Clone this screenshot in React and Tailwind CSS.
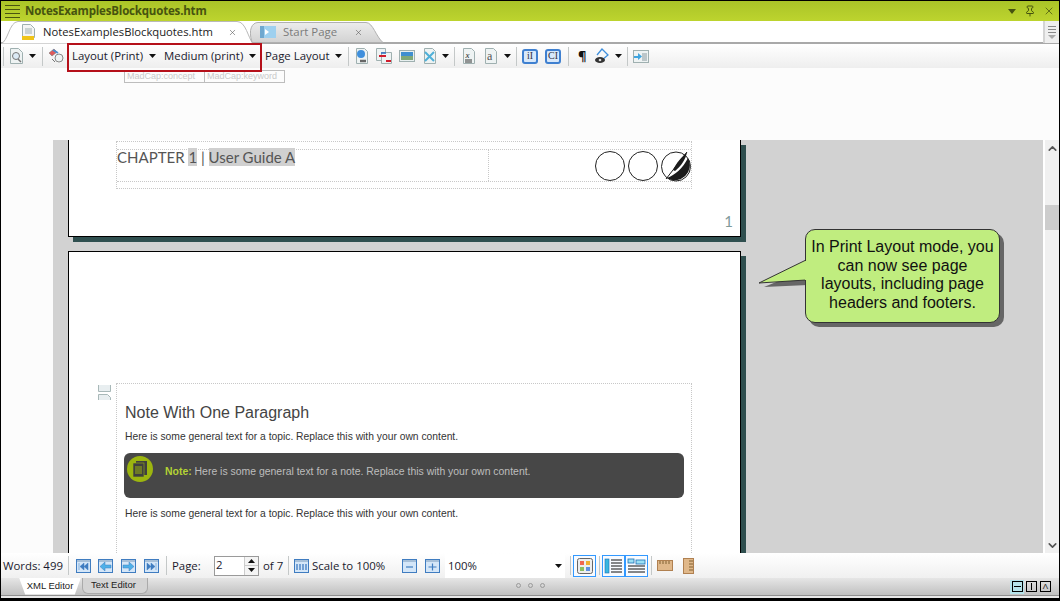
import { Pin, X, ChevronUp, ChevronDown } from "lucide-react";

const uiFont = { fontFamily: '"Open Sans", "Noto Sans", sans-serif' };

function Caret({ className = "" }) {
  return (
    <svg width="7" height="4" viewBox="0 0 7 4" className={className}>
      <path d="M0 0h7L3.5 4z" fill="#111" />
    </svg>
  );
}

function Sep({ className = "" }) {
  return <div className={`w-px h-[19px] bg-[#c4c8c8] ${className}`} />;
}

function Ico({ w = 16, h = 16, className = "", children }) {
  return (
    <svg width={w} height={h} viewBox={`0 0 ${w} ${h}`} className={`shrink-0 ${className}`}>
      {children}
    </svg>
  );
}

function DocShape() {
  return <path d="M1.5.5h8l3 3v12h-11z" fill="#eef3f3" stroke="#9fb0b0" />;
}

function NavIcon({ children }) {
  return (
    <Ico w={15} h={14}>
      <rect x=".5" y=".5" width="14" height="13" fill="#d4e6f8" stroke="#3f7cc0" />
      <rect x="1" y="1" width="13" height="2" fill="#a6bfd8" />
      {children}
    </Ico>
  );
}

function ToggleBox({ children }) {
  return (
    <div className="w-[23px] h-[22px] border border-[#3399ff] flex items-center justify-center bg-[#f8fbff]">
      {children}
    </div>
  );
}

function LinesIcon({ side }) {
  return (
    <Ico w={19} h={16}>
      {side ? (
        <>
          <rect x="1" y="1" width="4" height="14" fill="#39b7e0" stroke="#1c6fb5" strokeWidth=".6" />
          <path d="M7 2h11M7 5h11M7 8h11M7 11h11M7 14h11" stroke="#111" />
        </>
      ) : (
        <>
          <rect x="1" y="1" width="6" height="4" fill="#9be0f4" stroke="#1c6fb5" strokeWidth=".8" />
          <rect x="9" y="2" width="9" height="4" fill="#9be0f4" stroke="#1c6fb5" strokeWidth=".8" />
          <path d="M1 8h17M1 11h17M1 14h17" stroke="#111" />
        </>
      )}
    </Ico>
  );
}

function LetterIcon({ text }) {
  return (
    <div className="w-[16px] h-[15px] rounded-[3px] border-2 border-[#3f80d0] bg-[#d8e8fa] flex items-center justify-center text-[10px] leading-none text-[#334] font-['Liberation_Serif',serif]">
      {text}
    </div>
  );
}

export default function App() {
  return (
    <div className="relative w-[1060px] h-[601px] border border-black flex flex-col overflow-hidden bg-white" style={uiFont}>
      {/* Title bar */}
      <div className="h-[20px] shrink-0 flex items-center bg-gradient-to-b from-[#aac428] to-[#bdd42e]">
        <div className="ml-[4px] w-[15px] flex flex-col gap-[3px]">
          <div className="h-px bg-[#4a5510]" />
          <div className="h-px bg-[#4a5510]" />
          <div className="h-px bg-[#4a5510]" />
          <div className="h-px bg-[#4a5510]" />
        </div>
        <div className="ml-[5px] text-[11.5px] font-bold text-[#46530f] leading-none tracking-[-0.18px]">NotesExamplesBlockquotes.htm</div>
        <div className="ml-auto flex items-center text-[#46530f]">
          <Ico w={8} h={5}><path d="M0 0h8L4 5z" fill="#46530f" /></Ico>
          <Pin size={12} strokeWidth={2} className="ml-[8px]" />
          <X size={12} strokeWidth={1.5} className="ml-[7px] mr-[4px]" />
        </div>
      </div>

      {/* Document tabs */}
      <div className="relative h-[23px] shrink-0 flex border-b-[2px] border-[#a9a9a9] bg-white">
        <div className="relative w-[249px] h-[22px] flex items-center">
          <svg width="252" height="23" viewBox="0 0 252 23" className="absolute left-0 top-0">
            <path d="M0 22.5C7 21 8 1 17 .5H236C245 .5 247 17 252 22.5" fill="#fff" stroke="#b9b9b9" />
          </svg>
          <Ico w={13} h={16} className="relative ml-[21px]">
            <path d="M.5.5h8l4 4v9H.5z" fill="#f4f4f4" stroke="#9fb0b0" />
            <path d="M3 5h7M3 7h7M3 9h7" stroke="#9fb0b0" />
            <rect x="0" y="12" width="12" height="4" fill="#f0c419" />
          </Ico>
          <span className="relative ml-[8px] text-[11.25px] text-[#222] leading-none">NotesExamplesBlockquotes.htm</span>
          <X size={9} strokeWidth={1.5} className="relative ml-[15px] text-[#555]" />
        </div>
        <div className="relative w-[134px] h-[20px] mt-[1px] flex items-center">
          <svg width="134" height="21" viewBox="0 0 134 21" className="absolute left-0 top-0">
            <defs>
              <linearGradient id="startTab" x1="0" y1="0" x2="0" y2="1">
                <stop offset="0" stopColor="#ececec" />
                <stop offset="1" stopColor="#d2d2d2" />
              </linearGradient>
            </defs>
            <path d="M2 20C-2 8 2 .5 8 .5H116C123 .5 126 15 133 20.5H2z" fill="url(#startTab)" stroke="#b0b0b0" />
          </svg>
          <Ico w={16} h={12} className="relative ml-[10px]">
            <rect x="0" y="0" width="16" height="12" fill="#9ed0ef" />
            <rect x="0" y="0" width="4" height="12" fill="#6fa8cf" />
            <path d="M5 3l4 3-4 3z" fill="#fff" />
          </Ico>
          <span className="relative ml-[7px] text-[11.4px] text-[#7b7b7b] leading-none">Start Page</span>
          <X size={9} strokeWidth={1.5} className="relative ml-[17px] text-[#555]" />
        </div>
        <div className="absolute right-0 top-0 w-[16px] h-[22px] bg-[#efefef] border-l-[2px] border-[#d4d4d4] flex flex-col items-center justify-center gap-[2px]">
          <div className="w-[8px] h-px bg-[#888]" />
          <div className="w-[8px] h-px bg-[#888]" />
          <div className="w-[8px] h-px bg-[#888]" />
          <Ico w={8} h={4}><path d="M0 0h8L4 4z" fill="#aaa" /></Ico>
        </div>
      </div>

      {/* Toolbar */}
      <div className="h-[24px] shrink-0 flex items-center bg-gradient-to-b from-[#ffffff] to-[#eeeeee] text-[11.4px] text-[#1a1a2e]">
        <Sep className="ml-[2px]" />
        <Ico w={13} h={16} className="ml-[6px]">
          <path d="M.5.5h8l4 4v11H.5z" fill="#eef3f3" stroke="#9fb0b0" />
          <circle cx="6" cy="8" r="3.5" fill="#dbeaf5" stroke="#777" />
          <path d="M8 11l3 3" stroke="#777" strokeWidth="1.5" />
        </Ico>
        <Caret className="ml-[6px]" />
        <Sep className="ml-[6px]" />
        <Ico w={17} h={16} className="ml-[5px]">
          <path d="M1 5l5-4 3 3-5 4z" fill="#e05a5a" stroke="#777" strokeWidth=".6" />
          <path d="M5 2l5 3" stroke="#4a90d0" strokeWidth="2" />
          <circle cx="11" cy="10" r="4" fill="#eef3f3" stroke="#888" />
          <path d="M4 11l3 3" stroke="#777" />
        </Ico>
        <span className="ml-[7px] w-[77px] whitespace-nowrap">Layout (Print)</span>
        <Caret />
        <span className="ml-[8px] w-[85px] whitespace-nowrap">Medium (print)</span>
        <Caret />
        <span className="ml-[9px] w-[70px] whitespace-nowrap">Page Layout</span>
        <Caret />
        <Sep className="ml-[6px]" />
        <Ico w={14} h={16} className="ml-[6px]">
          <DocShape />
          <circle cx="6" cy="6" r="4" fill="#3f8fdc" />
          <path d="M5 13h6" stroke="#666" strokeWidth="2.5" />
        </Ico>
        <Ico w={16} h={16} className="ml-[7px]">
          <path d="M.5.5h9v12H.5z" fill="#eef3f3" stroke="#9fb0b0" />
          <path d="M5.5 4.500h10v11h-10z" fill="#eef3f3" stroke="#9fb0b0" />
          <path d="M3 8h7M10 13h5" stroke="#d01c2c" strokeWidth="2" />
          <path d="M5 5h5" stroke="#2a6fc0" strokeWidth="1.5" />
        </Ico>
        <Ico w={16} h={12} className="ml-[7px]">
          <rect x=".5" y=".5" width="15" height="11" fill="#e8f0f0" stroke="#9fb0b0" />
          <rect x="2" y="2" width="12" height="4" fill="#3f8fd0" />
          <rect x="2" y="6" width="12" height="4" fill="#7fa878" />
        </Ico>
        <Ico w={14} h={16} className="ml-[8px]">
          <DocShape />
          <path d="M2 4l9 9M11 4l-9 9" stroke="#4fb0d8" strokeWidth="2" />
        </Ico>
        <Caret className="ml-[5px]" />
        <Sep className="ml-[5px]" />
        <Ico w={13} h={16} className="ml-[7px]">
          <DocShape />
          <text x="3.500" y="10" fontSize="9" fontFamily="Liberation Serif" fontStyle="italic" fill="#222">x</text>
          <path d="M3 12h7M3 14h7" stroke="#333" />
        </Ico>
        <Ico w={13} h={16} className="ml-[9px]">
          <DocShape />
          <text x="3" y="12" fontSize="12" fontFamily="Liberation Serif" fill="#555">a</text>
        </Ico>
        <Caret className="ml-[7px]" />
        <Sep className="ml-[5px]" />
        <div className="ml-[5px]"><LetterIcon text="iI" /></div>
        <div className="ml-[7px]"><LetterIcon text="CI" /></div>
        <Sep className="ml-[7px]" />
        <span className="ml-[9px] w-[12px] text-[13px] font-bold text-[#111] leading-none">¶</span>
        <Ico w={16} h={17} className="ml-[4px]">
          <path d="M3 7l5-6 6 6-6 5" fill="none" stroke="#3f8fdc" strokeWidth="1.3" />
          <ellipse cx="6" cy="12" rx="5" ry="3" fill="#333" />
          <circle cx="6" cy="12" r="1.300" fill="#ddd" />
        </Ico>
        <Caret className="ml-[5px]" />
        <Sep className="ml-[5px]" />
        <Ico w={16} h={13} className="ml-[5px]">
          <rect x=".5" y=".5" width="15" height="12" fill="#eef3f3" stroke="#9fb0b0" />
          <path d="M9 4h5M9 6h5M9 8h5M9 10h5" stroke="#8a9aa0" />
          <path d="M1 6h4V3l4 3.500L5 10V8H1z" fill="#3fa5e0" />
        </Ico>
      </div>

      {/* Tag strip above the document */}
      <div className="h-[72px] shrink-0 bg-[#fcfcfc] pl-[123px] pt-[2px]">
        <div className="flex w-[161px] h-[13px] border border-[#bdbdbd] text-[9px] leading-[11px] text-[#c9c9c9] font-['Liberation_Sans',sans-serif]">
          <div className="w-[80px] pl-[2px] border-r border-[#bdbdbd]">MadCap:concept</div>
          <div className="pl-[2px]">MadCap:keyword</div>
        </div>
      </div>

      {/* Document area */}
      <div className="h-[413px] shrink-0 flex">
        <div className="w-[52px] shrink-0 bg-[#fcfcfc]" />
        <div className="flex-1 bg-[#d2d2d2] overflow-hidden pl-[15px]">
          <div className="relative w-[673px] h-[97px] bg-white border-x border-b border-black shadow-[5px_5px_0_#2f4f4f] pl-[47px] pt-px">
            <div className="w-[576px] h-[48px] border border-dotted border-[#c8c8c8] pt-[7px]">
              <div className="flex h-[33px] border-y border-dotted border-[#c8c8c8]">
                <div className="w-[373px] border-x border-dotted border-[#c8c8c8] text-[15px] leading-[14px] text-[#555] font-['Lato',sans-serif] whitespace-nowrap -ml-px">
                  CHAPTER <span className="bg-[#d0d0d0]">1</span> | <span className="bg-[#d0d0d0]">User Guide A</span>
                </div>
                <div className="flex-1 flex justify-end gap-[3px] items-start pt-[1px] -mr-px">
                  <div className="w-[30px] h-[30px] rounded-full border border-[#222]" />
                  <div className="w-[30px] h-[30px] rounded-full border border-[#222]" />
                  <Ico w={31} h={31}>
                    <circle cx="15" cy="15.500" r="14.500" fill="#fff" stroke="#222" />
                    <path d="M6 27C14 24 22 17 27 7A15 15 0 0 1 6 27z" fill="#1c1c1c" />
                    <path d="M12 19C15 12 21 6 26 1C25 8 20 15 14 20z" fill="#1c1c1c" />
                    <path d="M5 28L26 1" stroke="#1c1c1c" />
                  </Ico>
                </div>
              </div>
            </div>
            <div className="absolute right-[7px] bottom-[7px] text-[15px] leading-none text-[#7f9a9a] font-['Lato',sans-serif]">1</div>
          </div>

          <div className="relative mt-[14px] w-[673px] h-[400px] bg-white border border-black shadow-[5px_5px_0_#2f4f4f] pl-[47px] pt-[131px] font-['Liberation_Sans',sans-serif]">
            <Ico w={13} h={15} className="absolute left-[29px] top-[133px]">
              <path d="M.5 0v6.500h12V0" fill="#e8eef0" stroke="#a8b8b8" />
              <path d="M.5 15V9.500h9l3 3V15" fill="#e8eef0" stroke="#a8b8b8" />
            </Ico>
            <div className="w-[576px] h-[300px] border border-dotted border-[#c8c8c8] pl-[8px] pt-[19px]">
              <div className="text-[16px] leading-[20px] text-[#444]">Note With One Paragraph</div>
              <div className="mt-[7px] text-[10.3px] leading-[13px] text-[#333] whitespace-nowrap">Here is some general text for a topic. Replace this with your own content.</div>
              <div className="mt-[10px] -ml-px w-[560px] h-[45px] rounded-[6px] bg-[#474747] flex items-start pl-[3px] pt-[3px]">
                <div className="w-[26px] h-[26px] rounded-full bg-[#9cb50f] flex items-center justify-center">
                  <Ico w={14} h={16}>
                    <rect x="3" y="0" width="11" height="14" fill="#3f3f3f" />
                    <rect x="0" y="2" width="11" height="14" fill="#3f3f3f" stroke="#9cb50f" strokeWidth=".6" />
                    <path d="M2 6h7M2 8h7M2 10h7M2 12h7" stroke="#9cb50f" />
                  </Ico>
                </div>
                <div className="ml-[12px] mt-[9px] text-[10.45px] leading-[13px] text-[#bdbdbd] whitespace-nowrap">
                  <span className="font-bold text-[#b4d334]">Note:</span> Here is some general text for a note. Replace this with your own content.
                </div>
              </div>
              <div className="mt-[9px] text-[10.3px] leading-[13px] text-[#333] whitespace-nowrap">Here is some general text for a topic. Replace this with your own content.</div>
            </div>
          </div>
        </div>
        <div className="w-[16px] shrink-0 border-l-[2px] border-white bg-[#f0f0f0] flex flex-col items-center">
          <ChevronUp size={13} strokeWidth={3} className="mt-[2px] text-[#555]" />
          <div className="mt-[50px] w-full h-[25px] bg-[#cdcdcd]" />
          <ChevronDown size={13} strokeWidth={3} className="mt-auto mb-[1px] text-[#555]" />
        </div>
      </div>

      {/* Status bar */}
      <div className="h-[25px] shrink-0 flex items-center bg-gradient-to-b from-white to-[#f0f0f0] text-[11.4px] text-[#1a1a2e]">
        <span className="ml-[2px] w-[58px] whitespace-nowrap">Words: 499</span>
        <Sep className="ml-[7px]" />
        <div className="ml-[7px]"><NavIcon><path d="M3 4v7M8 4L4 7.500 8 11zM12 4L8 7.500 12 11z" fill="#3f7cc0" stroke="#3f7cc0" strokeWidth=".5" /></NavIcon></div>
        <div className="ml-[7px]"><NavIcon><path d="M2 7.500L7 3v3h6v3H7v3z" fill="#4fb0e8" stroke="#3f7cc0" strokeWidth=".5" /></NavIcon></div>
        <div className="ml-[8px]"><NavIcon><path d="M13 7.500L8 3v3H2v3h6v3z" fill="#4fb0e8" stroke="#3f7cc0" strokeWidth=".5" /></NavIcon></div>
        <div className="ml-[8px]"><NavIcon><path d="M12 4v7M3 4l4 3.500L3 11zM7 4l4 3.500L7 11z" fill="#3f7cc0" stroke="#3f7cc0" strokeWidth=".5" /></NavIcon></div>
        <Sep className="ml-[7px]" />
        <span className="ml-[5px] w-[42px]">Page:</span>
        <div className="w-[45px] h-[20px] border border-[#9a9a9a] bg-white flex">
          <span className="flex-1 pl-[1px] leading-[16px]">2</span>
          <div className="w-[14px] border-l border-[#ccc] flex flex-col">
            <div className="flex-1 flex items-center justify-center border-b border-[#ccc] bg-[#f4f4f4]"><Ico w={7} h={4}><path d="M0 4h7L3.500 0z" fill="#111" /></Ico></div>
            <div className="flex-1 flex items-center justify-center bg-[#f4f4f4]"><Caret /></div>
          </div>
        </div>
        <span className="ml-[4px] w-[25px]">of 7</span>
        <Sep />
        <div className="ml-[5px]">
          <NavIcon><path d="M3 5v6M6 5v6M9 5v6M12 5v6" stroke="#3f7cc0" strokeWidth="1.300" /></NavIcon>
        </div>
        <span className="ml-[3px] w-[75px] whitespace-nowrap">Scale to 100%</span>
        <div className="ml-[15px]"><NavIcon><path d="M4 8h7" stroke="#3f7cc0" strokeWidth="1.200" /></NavIcon></div>
        <div className="ml-[8px]"><NavIcon><path d="M3.500 8h8M7.500 4.500v7" stroke="#3f7cc0" strokeWidth="1.200" /></NavIcon></div>
        <div className="ml-[5px] w-[120px] h-[24px] bg-white flex items-center">
          <span className="ml-[3px] flex-1">100%</span>
          <Caret className="mr-[3px]" />
        </div>
        <Sep className="ml-[5px]" />
        <div className="ml-[2px]">
          <ToggleBox>
            <Ico w={16} h={16}>
              <rect x=".5" y=".5" width="15" height="15" rx="2" fill="#eee" stroke="#666" />
              <rect x="3" y="3" width="4" height="4" fill="#f0674f" />
              <rect x="9" y="3" width="4" height="4" fill="#f0b030" />
              <rect x="3" y="9" width="4" height="4" fill="#8cc060" />
              <rect x="9" y="9" width="4" height="4" fill="#5f90e0" />
            </Ico>
          </ToggleBox>
        </div>
        <Sep className="ml-[3px]" />
        <div className="ml-[2px] flex">
          <ToggleBox><LinesIcon side /></ToggleBox>
          <ToggleBox><LinesIcon /></ToggleBox>
        </div>
        <Sep className="ml-[3px]" />
        <Ico w={16} h={11} className="ml-[5px]">
          <rect x=".5" y=".5" width="15" height="10" fill="#e0b88a" stroke="#b08050" />
          <path d="M3 1v3M6 1v3M9 1v3M12 1v3" stroke="#806030" />
        </Ico>
        <Ico w={11} h={16} className="ml-[10px]">
          <rect x=".5" y=".5" width="10" height="15" fill="#e0b88a" stroke="#b08050" />
          <path d="M6 3h4M6 6h4M6 9h4M6 12h4" stroke="#806030" />
        </Ico>
      </div>

      {/* Bottom view tabs */}
      <div className="relative h-[18px] shrink-0 flex items-center bg-gradient-to-b from-[#e6e6e6] to-[#c0c0c0] border-b border-[#8f8f8f] text-[9.5px] font-['Liberation_Sans',sans-serif] text-[#222]">
        <div className="relative ml-[18px] w-[62px] h-[17px] -mt-px bg-white flex items-center justify-center [clip-path:polygon(0_0,100%_0,90%_100%,10%_100%)]">XML Editor</div>
        <div className="ml-[1px] w-[66px] h-[16px] -mt-px pr-[3px] rounded-b-[6px] bg-[#d4d4d4] border-x border-b border-[#aaa] flex items-center justify-center">Text Editor</div>
        <div className="absolute left-[515px] top-[5px] flex gap-[7px]">
          <div className="w-[5px] h-[5px] rounded-full border border-[#999]" />
          <div className="w-[5px] h-[5px] rounded-full border border-[#999]" />
          <div className="w-[5px] h-[5px] rounded-full border border-[#999]" />
        </div>
        <div className="ml-auto mr-[8px] flex items-center gap-[2px]">
          <div className="w-[14px] h-[14px] bg-[#b5e3ea] flex items-center justify-center"><div className="w-[11px] h-[11px] border border-black flex items-center justify-center"><div className="w-[7px] h-px bg-black" /></div></div>
          <div className="w-[11px] h-[11px] border border-black flex items-center justify-center"><div className="w-px h-[7px] bg-black" /></div>
          <div className="ml-[1px] w-[11px] h-[11px] border border-black flex items-center justify-center text-[8px] leading-none">Λ</div>
        </div>
      </div>
      <div className="flex-1 bg-[#e8e8e8] border-b-[2px] border-black" />

      {/* Callout over the document */}
      <div className="absolute left-[757px] top-[228px] w-[250px] h-[100px]">
        <svg width="50" height="40" viewBox="0 0 50 40" className="absolute left-0 top-[28px]">
          <path d="M6 30L50 12v16z" fill="#666" />
          <path d="M1 26L48 3v20z" fill="#c0ed7f" stroke="#333" />
        </svg>
        <div className="absolute left-[47px] top-0 w-[195px] h-[94px] rounded-[10px] border border-[#333] bg-[#c0ed7f] shadow-[4px_4px_0_#666] text-center text-[16px] leading-[18.5px] text-[#111] font-['Liberation_Sans',sans-serif] pt-[8px] whitespace-nowrap">
          In Print Layout mode, you<br />can now see page<br />layouts, including page<br />headers and footers.
        </div>
        <div className="absolute left-[47px] top-[32px] w-[2px] h-[19px] bg-[#c0ed7f]" />
      </div>

      {/* Red highlight around the layout dropdowns */}
      <div className="absolute left-[66px] top-[42px] w-[195px] h-[29px] border-2 border-[#b5101a]" />
    </div>
  );
}
